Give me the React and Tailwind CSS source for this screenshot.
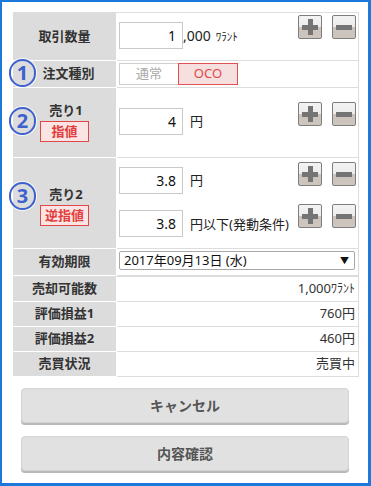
import React from 'react';

const font = { fontFamily: '"Noto Sans", "Noto Sans CJK JP", sans-serif' };

const Circle = ({ n, top }) => (
    <div
        className="absolute left-[-4px] w-[27px] h-[28px] rounded-full border-2 border-[#3d62cf] flex items-center justify-center text-[#3d62cf] text-[20px] font-bold leading-none shadow-[0_0_0_1px_rgba(255,255,255,0.8)]"
        style={{ top }}
    >
        {n}
    </div>
);

const StepButtons = ({ className = '' }) => (
    <div className={`flex gap-[10px] ${className}`}>
        {['plus', 'minus'].map((k) => (
            <div
                key={k}
                className="relative w-[24px] h-[24px] rounded-[2px] border border-[#7d7d7d] bg-[linear-gradient(to_bottom,#f3f3f3_0%,#ececec_50%,#cbc3bb_50%,#cdc6bf_100%)]"
            >
                {/* horizontal bar */}
                <span className="absolute left-[3px] right-[3px] top-[9px] h-[5px] bg-[#747474]" />
                {k === 'plus' && <span className="absolute top-[3px] bottom-[3px] left-[9px] w-[5px] bg-[#747474]" />}
            </div>
        ))}
    </div>
);

const NumBox = ({ value, className = '' }) => (
    <div className={`w-[64px] h-[27px] border border-[#c9c9c9] bg-white flex items-center justify-end pr-[6px] text-[14px] text-[#111] ${className}`}>
        {value}
    </div>
);

const Badge = ({ children }) => (
    <div className="mt-[2px] px-[4px] h-[21px] border border-[#e04848] bg-[#fbe4e4] text-[#e23c3c] text-[13px] font-bold flex items-center justify-center leading-none">
        {children}
    </div>
);

const Row = ({ h, label, children, valueClass = '' }) => (
    <div className={`flex ${h}`}>
        <div className="relative w-[103px] mr-[1px] bg-[#dcdcdc] border-b border-white flex flex-col items-center justify-center text-[13px] font-bold text-[#333]">
            {label}
        </div>
        <div className={`flex-1 border-b border-r border-[#dddddd] bg-white ${valueClass}`}>{children}</div>
    </div>
);

const InfoRow = ({ label, value }) => (
    <Row h="h-[25px]" label={label} valueClass="flex items-center justify-end pr-[3px] text-[13px] text-[#333]">
        {value}
    </Row>
);

export default function App() {
    return (
        <div
            className="w-[371px] h-[486px] bg-white border-[#1b79dc] border-l-2 border-t-2 border-r-[3px] border-b-[3px] pt-[10px] pl-[11px] pr-[9px]"
            style={font}
        >
            {/* Order form */}
            <div className="border-t border-[#dddddd]">
                <Row h="h-[48px]" label="取引数量" valueClass="flex items-start pl-[2px] pr-[2px]">
                    <NumBox value="1" className="mt-[9px]" />
                    <span className="mt-[13px] text-[14px] text-[#222] leading-[20px]">,000</span>
                    <span className="mt-[14px] ml-[5px] text-[11px] text-[#222] leading-[20px]">ﾜﾗﾝﾄ</span>
                    <StepButtons className="ml-auto mt-[2px]" />
                </Row>

                <Row
                    h="h-[27px]"
                    label={
                        <>
                            <Circle n="1" top="-2px" />
                            <span className="pl-[8px]">注文種別</span>
                        </>
                    }
                    valueClass="flex items-start pl-[2px] pt-[2px]"
                >
                    <div className="w-[59px] h-[22px] border border-[#cfcfcf] border-r-0 flex items-center justify-center text-[13px] text-[#a8a8a8]">
                        通常
                    </div>
                    <div className="w-[60px] h-[22px] border border-[#e05050] bg-[#f6dfdf] flex items-center justify-center text-[13px] text-[#e04a4a]">
                        OCO
                    </div>
                </Row>

                <Row
                    h="h-[70px]"
                    label={
                        <>
                            <Circle n="2" top="19px" />
                            <span className="mt-[-2px] leading-[18px] pl-[3px]">売り1</span>
                            <Badge>
                                <span className="px-[6px]">指値</span>
                            </Badge>
                        </>
                    }
                    valueClass="flex items-start pl-[2px] pr-[2px]"
                >
                    <NumBox value="4" className="mt-[20px]" />
                    <span className="mt-[23px] ml-[7px] text-[13px] text-[#222] leading-[20px]">円</span>
                    <StepButtons className="ml-auto mt-[14px]" />
                </Row>

                <Row
                    h="h-[91px]"
                    label={
                        <>
                            <Circle n="3" top="24px" />
                            <span className="mt-[4px] leading-[18px] pl-[3px]">売り2</span>
                            <Badge>逆指値</Badge>
                        </>
                    }
                    valueClass="flex flex-col pl-[2px] pr-[2px]"
                >
                    <div className="flex items-start h-[43px]">
                        <NumBox value="3.8" className="mt-[9px]" />
                        <span className="mt-[12px] ml-[7px] text-[13px] text-[#222] leading-[20px]">円</span>
                        <StepButtons className="ml-auto mt-[4px]" />
                    </div>
                    <div className="flex items-start">
                        <NumBox value="3.8" className="mt-[9px]" />
                        <span className="mt-[13px] ml-[7px] text-[13px] text-[#222] leading-[20px]">円以下(発動条件)</span>
                        <StepButtons className="ml-auto mt-[3px]" />
                    </div>
                </Row>

                <Row h="h-[27px]" label="有効期限" valueClass="pl-[2px] pr-[3px] pt-[2px]">
                    <div className="h-[19px] border border-[#a9a9a9] rounded-[2px] flex items-center justify-between pl-[4px] pr-[5px] text-[13px] text-[#111]">
                        <span>2017年09月13日 (水)</span>
                        <span className="text-[9px]">▼</span>
                    </div>
                </Row>
            </div>

            {/* Status */}
            <div className="border-t border-[#dddddd]">
                <InfoRow label="売却可能数" value={<span>1,000<span className="text-[12px]">ﾜﾗﾝﾄ</span></span>} />
                <InfoRow label="評価損益1" value="760円" />
                <InfoRow label="評価損益2" value="460円" />
                <InfoRow label="売買状況" value="売買中" />
            </div>

            {/* Actions */}
            <div className="flex flex-col gap-[13px] mt-[11px] pl-[8px] pr-[10px]">
                <button className="h-[35px] rounded-[4px] bg-[#e1e1e1] border border-[#d4d4d4] shadow-[0_2px_0_#b8b8b8] text-[14px] font-bold text-[#555]">
                    キャンセル
                </button>
                <button className="h-[35px] rounded-[4px] bg-[#e1e1e1] border border-[#d4d4d4] shadow-[0_2px_0_#b8b8b8] text-[14px] font-bold text-[#555]">
                    内容確認
                </button>
            </div>
        </div>
    );
}
